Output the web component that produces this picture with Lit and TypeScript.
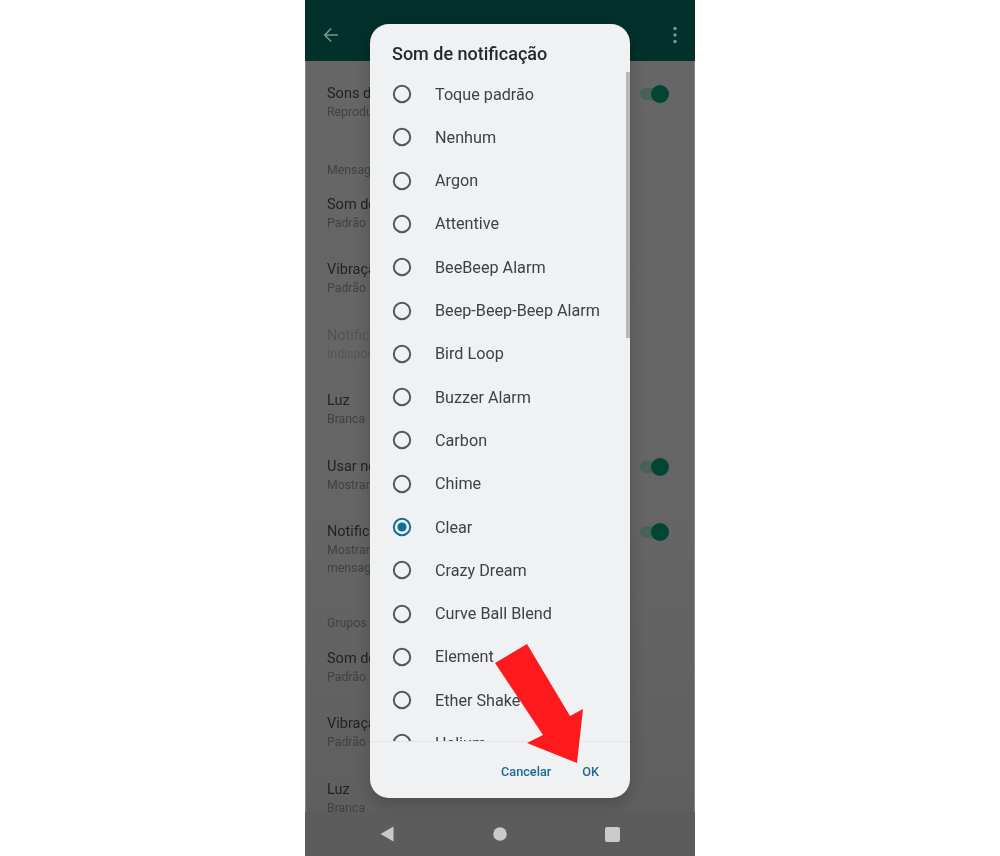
import { LitElement, html, css, svg } from "lit";
import { customElement } from "lit/decorators.js";

const SOUNDS = ["Toque padrão","Nenhum","Argon","Attentive","BeeBeep Alarm","Beep-Beep-Beep Alarm","Bird Loop","Buzzer Alarm","Carbon","Chime","Clear","Crazy Dream","Curve Ball Blend","Element","Ether Shake","Helium"];

type Row = { label?: string; t?: string; s?: string; s2?: string; on?: boolean; off?: boolean; cls?: string };
const ROWS: Row[] = [
  { t: "Sons de conversa", s: "Reproduzir sons", on: true },
  { label: "Mensagens" },
  { t: "Som de notificação", s: "Padrão" },
  { t: "Vibração", s: "Padrão" },
  { t: "Notificações", s: "Indisponível", off: true },
  { t: "Luz", s: "Branca" },
  { t: "Usar notificações", s: "Mostrar", on: true },
  { t: "Notificações", s: "Mostrar prévia", s2: "mensagens", on: true },
  { label: "Grupos", cls: "second" },
  { t: "Som de notificação", s: "Padrão" },
  { t: "Vibração", s: "Padrão" },
  { t: "Luz", s: "Branca" },
];

@customElement("app-root")
export class AppRoot extends LitElement {
  static styles = css`
    :host { display: block; height: 856px; background: #fff; font-family: Roboto, "Liberation Sans", sans-serif; }
    .stage { display: flex; justify-content: center; height: 856px; }
    .phone { position: relative; width: 390px; height: 856px; background: linear-gradient(#666666, #656565 60%, #5f5f5f 95%); box-shadow: inset 1px 0 0 #868686, inset -1px 0 0 #868686; display: flex; flex-direction: column; overflow: hidden; filter: blur(0.45px); }
    .bar { height: 61px; flex: none; background: #02302a; display: flex; align-items: center; justify-content: space-between; padding: 9px 17px 0 18px; box-sizing: border-box; }
    .bar svg { display: block; }
    .list { flex: 1; min-height: 0; padding: 8px 26px 0 22px; }
    .row { height: 65.5px; box-sizing: border-box; padding-top: 15.5px; display: flex; align-items: flex-start; justify-content: space-between; }
    .row.tall { height: 83.5px; }
    .t { font-size: 14.5px; line-height: 18px; color: #1f2221; white-space: nowrap; }
    .s { font-size: 12.3px; line-height: 18px; color: #3f4243; white-space: nowrap; }
    .off .t { color: #535455; }
    .off .s { color: #545556; }
    .label { font-size: 12.3px; line-height: 18px; color: #3f4243; padding: 26px 0 1.5px; }
    .label.second { padding: 22.5px 0 2.5px; }
    .sw { position: relative; width: 29px; height: 18px; flex: none; margin-top: 0; }
    .sw::before { content: ""; position: absolute; left: 0; top: 3px; width: 26px; height: 12px; border-radius: 6px; background: #46625b; }
    .sw::after { content: ""; position: absolute; right: 0; top: 0; width: 18px; height: 18px; border-radius: 50%; background: #014533; }
    .nav { height: 44px; flex: none; background: #5c5c5c; display: flex; align-items: center; justify-content: space-between; padding: 0 75px; box-sizing: border-box; }
    .nav svg { display: block; }
    .dialog { position: absolute; left: 65px; top: 24px; width: 260px; height: 774px; background: #eff1f3; border-radius: 19px; box-shadow: 0 6px 16px rgba(0,0,0,.2); display: flex; flex-direction: column; overflow: hidden; }
    .title { flex: none; height: 48.4px; box-sizing: border-box; padding: 19px 0 0 22px; font-size: 18px; line-height: 22px; font-weight: 500; color: #26282a; }
    .opts { position: relative; flex: none; height: 669.6px; overflow: hidden; border-bottom: 1px solid #e3e5e7; box-sizing: border-box; }
    .opt { height: 43.3px; display: flex; align-items: center; gap: 23px; padding-left: 22px; font-size: 16.2px; color: #3f4244; white-space: nowrap; }
    .opt svg { flex: none; display: block; }
    .thumb { position: absolute; right: 0; top: 0; width: 4px; height: 266px; background: #b6b8ba; }
    .acts { flex: 1; display: flex; justify-content: flex-end; align-items: center; gap: 31px; padding: 4px 31px 0 0; font-size: 12.7px; font-weight: 500; color: #1d6a8e; }
    .arrow { position: absolute; left: 190px; top: 640px; pointer-events: none; }
  `;

  private radio(on: boolean) {
    return html`<svg width="20" height="20" viewBox="0 0 20 20">
      <circle cx="10" cy="10" r="8.2" fill="none" stroke=${on ? "#116f93" : "#55585a"} stroke-width="2"></circle>
      ${on ? svg`<circle cx="10" cy="10" r="4.6" fill="#116f93"></circle>` : ""}
    </svg>`;
  }

  private settingRow(r: Row) {
    if (r.label) return html`<div class="label ${r.cls ?? ""}">${r.label}</div>`;
    return html`<div class="row ${r.s2 ? "tall" : ""} ${r.off ? "off" : ""}">
      <div>
        <div class="t">${r.t}</div>
        <div class="s">${r.s}</div>
        ${r.s2 ? html`<div class="s">${r.s2}</div>` : ""}
      </div>
      ${r.on ? html`<div class="sw"></div>` : ""}
    </div>`;
  }

  render() {
    return html`<div class="stage">
      <div class="phone">
        <div class="bar">
          <svg width="16" height="16" viewBox="0 0 16 16"><path d="M15 8H2M8.2 1.5 1.7 8l6.5 6.5" fill="none" stroke="#7b9790" stroke-width="1.5"></path></svg>
          <svg width="6" height="18" viewBox="0 0 6 18"><circle cx="3" cy="2.5" r="1.7" fill="#7b9790"></circle><circle cx="3" cy="9" r="1.7" fill="#7b9790"></circle><circle cx="3" cy="15.5" r="1.7" fill="#7b9790"></circle></svg>
        </div>
        <div class="list">${ROWS.map((r) => this.settingRow(r))}</div>
        <div class="nav">
          <svg width="14" height="16" viewBox="0 0 14 16"><path d="M13.5 0.5V15.5L0.5 8Z" fill="#c9c9c9"></path></svg>
          <svg width="14" height="14" viewBox="0 0 14 14"><circle cx="7" cy="7" r="6.8" fill="#cbcbcb"></circle></svg>
          <svg width="15" height="15" viewBox="0 0 15 15"><rect width="15" height="15" rx="2" fill="#cbcbcb"></rect></svg>
        </div>
        <div class="dialog">
          <div class="title">Som de notificação</div>
          <div class="opts">
            ${SOUNDS.map((s) => html`<div class="opt">${this.radio(s === "Clear")}<span>${s}</span></div>`)}
            <div class="thumb"></div>
          </div>
          <div class="acts"><span>Cancelar</span><span>OK</span></div>
        </div>
        <svg class="arrow" width="100" height="130" viewBox="190 640 100 130">
          <polygon points="190,663 222,644 265,716 278,709 272,763 222,743 238,735" fill="#fe1a1c"></polygon>
        </svg>
      </div>
    </div>`;
  }
}
